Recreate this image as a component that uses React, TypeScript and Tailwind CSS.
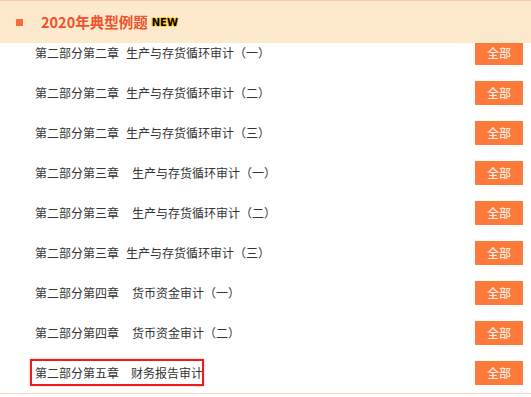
import React from "react";

type Item = { chapter: string; gap: number; title: string; marked?: boolean };

const items: Item[] = [
  { chapter: "第二部分第二章", gap: 7, title: "生产与存货循环审计（一）" },
  { chapter: "第二部分第二章", gap: 7, title: "生产与存货循环审计（二）" },
  { chapter: "第二部分第二章", gap: 7, title: "生产与存货循环审计（三）" },
  { chapter: "第二部分第三章", gap: 13, title: "生产与存货循环审计（一）" },
  { chapter: "第二部分第三章", gap: 13, title: "生产与存货循环审计（二）" },
  { chapter: "第二部分第三章", gap: 7, title: "生产与存货循环审计（三）" },
  { chapter: "第二部分第四章", gap: 13, title: "货币资金审计（一）" },
  { chapter: "第二部分第四章", gap: 13, title: "货币资金审计（二）" },
  { chapter: "第二部分第五章", gap: 12, title: "财务报告审计", marked: true },
];

function Row({ item }: { item: Item }) {
  return (
    <li className="flex h-10 items-center justify-between pl-[35px] pr-2">
      <span className="relative flex text-[12px] leading-4 text-[#333]">
        <span>{item.chapter}</span>
        <span style={{ marginLeft: item.gap }}>{item.title}</span>
        {item.marked && (
          <span className="absolute -top-[6px] -bottom-[5px] -left-[5px] -right-[1px] border-2 border-[#ea1c1c] shadow-[0_0_2px_rgba(234,28,28,0.4)]" />
        )}
      </span>
      <button className="flex h-6 w-12 items-center justify-center bg-[#fd7a3a] text-[12px] text-white">
        全部
      </button>
    </li>
  );
}

export default function App() {
  return (
    <div className="h-[397px] w-[531px] overflow-hidden bg-white font-['Noto_Sans_CJK_SC','Noto_Sans',sans-serif]">
      <div className="flex h-[43px] items-center border-t border-[#fbc6ae] bg-[#fdeacc]">
        <span className="ml-4 h-[7px] w-[7px] bg-[#fd6a3c]" />
        <h2 className="ml-[18px] text-[14.5px] font-bold text-[#f0502a]">2020年典型例题</h2>
        <span className="ml-[4px] mt-[1px] font-['DejaVu_Sans',sans-serif] text-[10px] font-bold leading-none text-black [text-shadow:1px_0_0_#ffcc1a,-1px_0_0_#ffcc1a,0_1px_0_#ffcc1a,0_-1px_0_#ffcc1a]">
          NEW
        </span>
      </div>
      <div className="h-[351px] overflow-hidden border-b border-[#fcd0bc]">
        <ul className="-mt-[10px]">
          {items.map((item, i) => (
            <Row key={i} item={item} />
          ))}
        </ul>
      </div>
    </div>
  );
}
